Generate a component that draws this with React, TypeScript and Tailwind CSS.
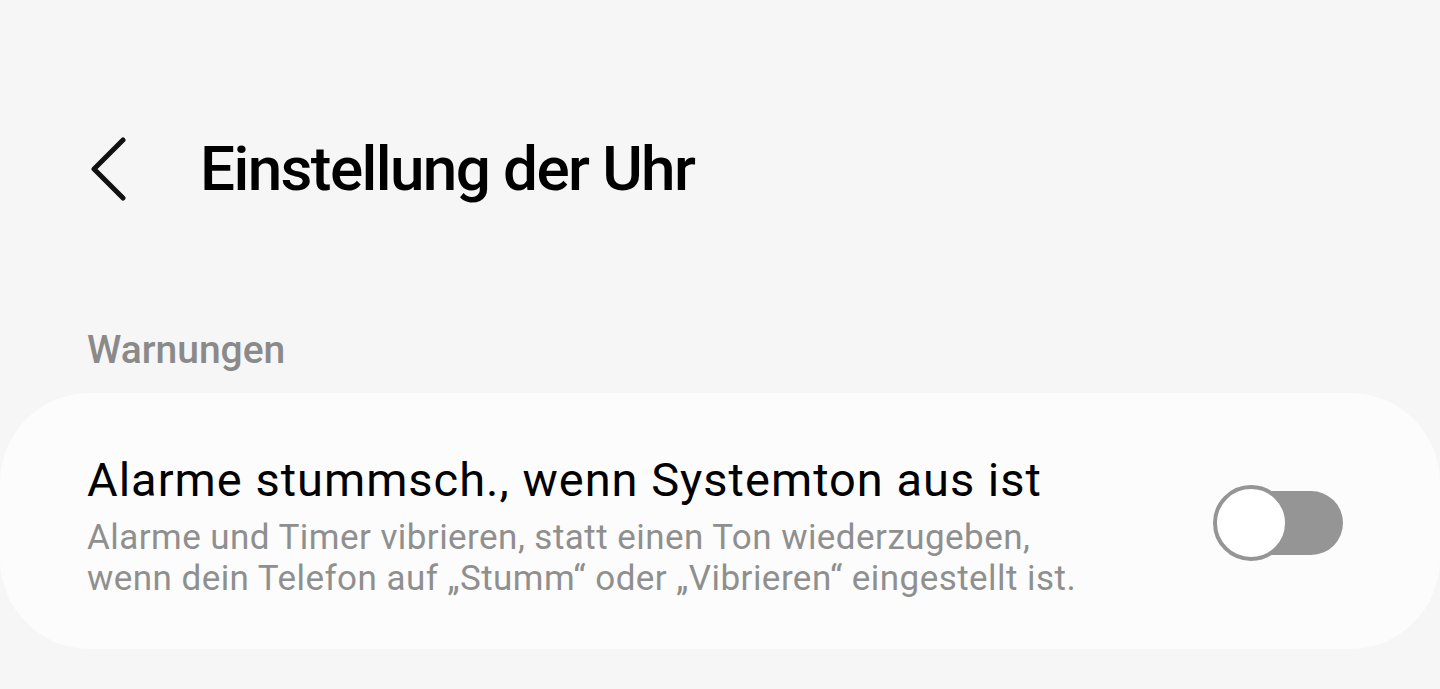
import React, { useState } from 'react';

const ChevronLeft: React.FC = () => (
  <svg width="40" height="64" viewBox="0 0 40 64" fill="none" stroke="currentColor">
    <path d="M34 3 L5 32 L34 61" strokeWidth={5} strokeLinecap="round" strokeLinejoin="round" />
  </svg>
);

const Toggle: React.FC<{ on: boolean; onChange: () => void }> = ({ on, onChange }) => (
  <button onClick={onChange} className="relative flex items-center w-[130px] h-[76px] mb-[6px] shrink-0">
    <span className="absolute left-[8px] right-0 h-[64px] rounded-full bg-[#959595]" />
    <span
      className={
        on
          ? 'absolute right-0 w-[76px] h-[76px] rounded-full bg-white border-[4px] border-[#959595]'
          : 'absolute left-0 w-[76px] h-[76px] rounded-full bg-white border-[4px] border-[#959595]'
      }
    />
  </button>
);

export default function App() {
  const [muted, setMuted] = useState(false);

  return (
    <div className="min-h-screen bg-[#f6f6f6] font-['Roboto',sans-serif] overflow-hidden">
      {/* Header */}
      <div className="flex items-center h-[64px] mt-[137px] pl-[89px] text-[#111]">
        <ChevronLeft />
        <h1 className="ml-[71px] text-[62px] leading-[62px] font-medium tracking-[-1.6px] text-black">
          Einstellung der Uhr
        </h1>
      </div>

      {/* Section label */}
      <div className="mt-[130px] pl-[87px] text-[39px] leading-[39px] font-medium text-[#8a8a8a]">
        Warnungen
      </div>

      {/* Card */}
      <div className="mt-[23px] bg-[#fcfcfc] rounded-[90px] flex items-center justify-between pl-[87px] pr-[97px] pt-[59px] pb-[50px]">
        <div className="flex flex-col">
          <div className="text-[47px] leading-[56px] tracking-[1px] text-black">
            Alarme stummsch., wenn Systemton aus ist
          </div>
          <div className="mt-[9px] text-[35px] leading-[41px] tracking-[0.45px] text-[#8f8f8f]">
            Alarme und Timer vibrieren, statt einen Ton wiederzugeben,
            <br />
            wenn dein Telefon auf „Stumm“ oder „Vibrieren“ eingestellt ist.
          </div>
        </div>
        <Toggle on={muted} onChange={() => setMuted(m => !m)} />
      </div>
    </div>
  );
}
